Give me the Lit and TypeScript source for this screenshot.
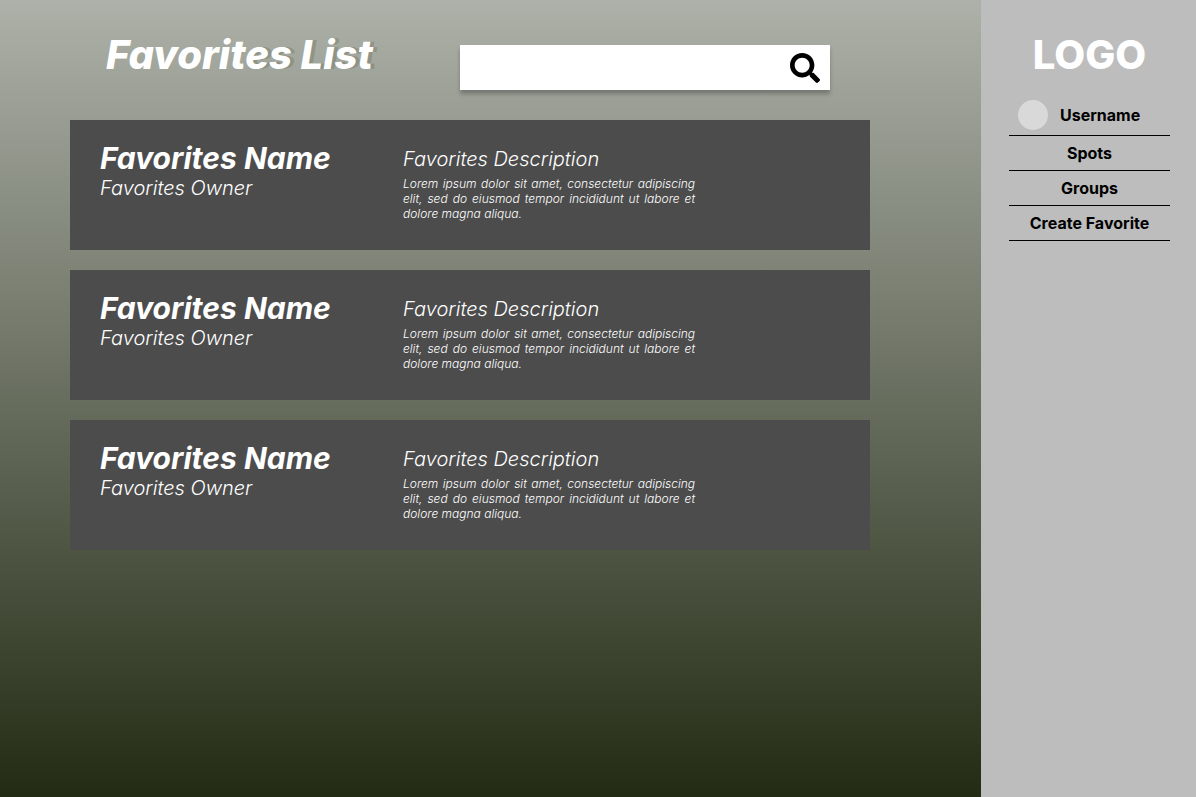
import { LitElement, html, css } from "lit";
import { customElement, property } from "lit/decorators.js";

interface Favorite {
  name: string;
  owner: string;
  title: string;
  description: string;
}

const favorites: Favorite[] = Array.from({ length: 3 }, () => ({
  name: "Favorites Name",
  owner: "Favorites Owner",
  title: "Favorites Description",
  description:
    "Lorem ipsum dolor sit amet, consectetur adipiscing elit, sed do eiusmod tempor incididunt ut labore et dolore magna aliqua.",
}));

@customElement("favorite-card")
class FavoriteCard extends LitElement {
  @property({ attribute: false }) favorite!: Favorite;

  static styles = css`
    :host {
      display: block;
    }
    .card {
      display: grid;
      grid-template-columns: minmax(0, 303fr) minmax(0, 292fr) minmax(0, 145fr);
      box-sizing: border-box;
      min-height: 130px;
      padding: 20px 30px;
      background: #4c4c4c;
      color: #fff;
      font-style: italic;
    }
    .name {
      margin: 0;
      font-size: 30px;
      line-height: 36px;
      font-weight: 700;
    }
    .owner,
    .title {
      margin: 0;
      font-size: 20px;
      line-height: 24px;
      font-weight: 300;
    }
    .title {
      padding-top: 7px;
      padding-bottom: 5px;
    }
    .description {
      margin: 0;
      font-size: 12px;
      line-height: 15px;
      font-weight: 300;
      text-align: justify;
    }
  `;

  render() {
    const { name, owner, title, description } = this.favorite;
    return html`
      <article class="card">
        <div>
          <h2 class="name">${name}</h2>
          <p class="owner">${owner}</p>
        </div>
        <div>
          <h3 class="title">${title}</h3>
          <p class="description">${description}</p>
        </div>
      </article>
    `;
  }
}

@customElement("app-root")
class AppRoot extends LitElement {
  static styles = css`
    :host {
      display: grid;
      grid-template-columns: minmax(0, 1fr) 215px;
      min-height: 100vh;
      font-family: Inter, sans-serif;
      background: linear-gradient(#adb1a9, #232b14);
    }
    .content {
      padding: 30px 111px 30px 70px;
    }
    .header {
      display: flex;
      justify-content: space-between;
      padding: 0 40px 0 36px;
      gap: 40px;
    }
    .heading {
      margin: 0;
      color: #fff;
      font-size: 40px;
      line-height: 50px;
      font-weight: 800;
      font-style: italic;
      white-space: nowrap;
    }
    .shaded {
      text-shadow: 4px 0 0 rgba(110, 115, 95, 0.4);
    }
    .search {
      display: flex;
      align-items: center;
      box-sizing: border-box;
      width: 370px;
      height: 45px;
      margin-top: 15px;
      padding: 0 10px;
      background: #fff;
      box-shadow: 0 4px 4px rgba(0, 0, 0, 0.25);
    }
    .query {
      flex: 1;
      min-width: 0;
      height: 100%;
      border: 0;
      padding: 0;
      outline: 0;
      background: none;
      font: 16px Inter, sans-serif;
    }
    .submit {
      display: flex;
      border: 0;
      padding: 0;
      background: none;
      color: #000;
      cursor: pointer;
    }
    .list {
      display: grid;
      gap: 20px;
      margin: 30px 0 0;
      padding: 0;
      list-style: none;
    }
    .sidebar {
      padding: 30px 26px 30px 28px;
      background: #bdbdbd;
      text-align: center;
    }
    .logo {
      margin: 0;
      color: #fff;
      font-size: 40px;
      line-height: 50px;
      font-weight: 800;
    }
    .menu {
      margin: 15px 0 0;
      padding: 0;
      list-style: none;
    }
    .item {
      border-bottom: 1px solid #000;
    }
    .link {
      display: flex;
      justify-content: center;
      align-items: center;
      height: 34px;
      color: #000;
      font-size: 16px;
      line-height: 20px;
      font-weight: 700;
      text-decoration: none;
    }
    .user {
      justify-content: flex-start;
      gap: 12px;
      height: 40px;
      padding-left: 9px;
    }
    .avatar {
      width: 30px;
      height: 30px;
      border-radius: 50%;
      background: #d9d9d9;
    }
  `;

  render() {
    return html`
      <main class="content">
        <header class="header">
          <h1 class="heading">Favorit<span class="shaded">es List</span></h1>
          <form class="search" role="search" @submit=${(e: Event) => e.preventDefault()}>
            <input class="query" type="search" aria-label="Search favorites" />
            <button class="submit" type="submit" aria-label="Search">
              <svg width="30" height="30" viewBox="0 0 512 512" fill="currentColor" aria-hidden="true">
                <path
                  d="M505 442.7L405.3 343c-4.5-4.5-10.6-7-17-7H372c27.6-35.3 44-79.7 44-128C416 93.1 322.9 0 208 0S0 93.1 0 208s93.1 208 208 208c48.3 0 92.7-16.4 128-44v16.3c0 6.4 2.5 12.5 7 17l99.7 99.7c9.4 9.4 24.6 9.4 33.9 0l28.3-28.3c9.4-9.4 9.4-24.6.1-34zM208 336c-70.7 0-128-57.2-128-128 0-70.7 57.2-128 128-128 70.7 0 128 57.2 128 128 0 70.7-57.2 128-128 128z"
                />
              </svg>
            </button>
          </form>
        </header>
        <ul class="list">
          ${favorites.map((f) => html`<li><favorite-card .favorite=${f}></favorite-card></li>`)}
        </ul>
      </main>
      <aside class="sidebar">
        <p class="logo">LOGO</p>
        <nav>
          <ul class="menu">
            <li class="item">
              <a class="link user" href="#user"><span class="avatar"></span>Username</a>
            </li>
            ${["Spots", "Groups", "Create Favorite"].map(
              (label) => html`<li class="item"><a class="link" href="#">${label}</a></li>`
            )}
          </ul>
        </nav>
      </aside>
    `;
  }
}
